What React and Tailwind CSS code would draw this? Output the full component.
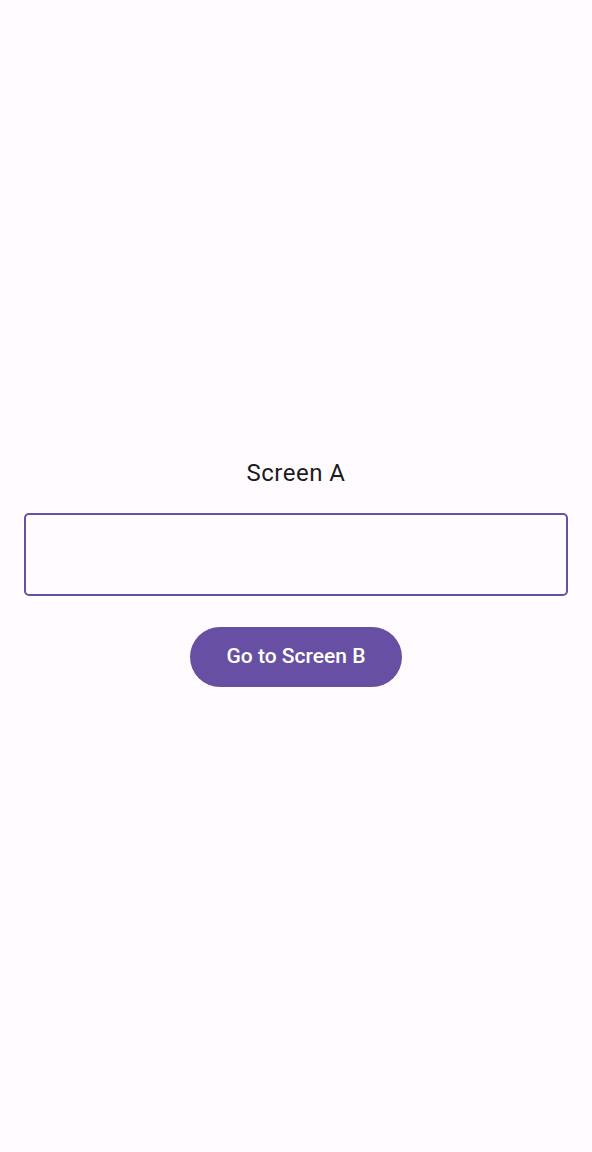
export default function App() {
  return (
    <div className="min-h-[1152px] w-full bg-[#fffbfe] flex flex-col items-center pt-[458px] font-['Roboto',sans-serif]">
      <p className="text-[24px] leading-[30px] tracking-[0.5px] text-[#1c1b1f]">Screen A</p>
      <div className="mt-[25px] w-[544px] h-[83px] rounded-[5px] border-2 border-[#6750a4] bg-transparent" />
      <button className="mt-[31px] w-[212px] h-[60px] rounded-full bg-[#6750a4] text-white text-[21px] font-medium">
        Go to Screen B
      </button>
    </div>
  )
}
